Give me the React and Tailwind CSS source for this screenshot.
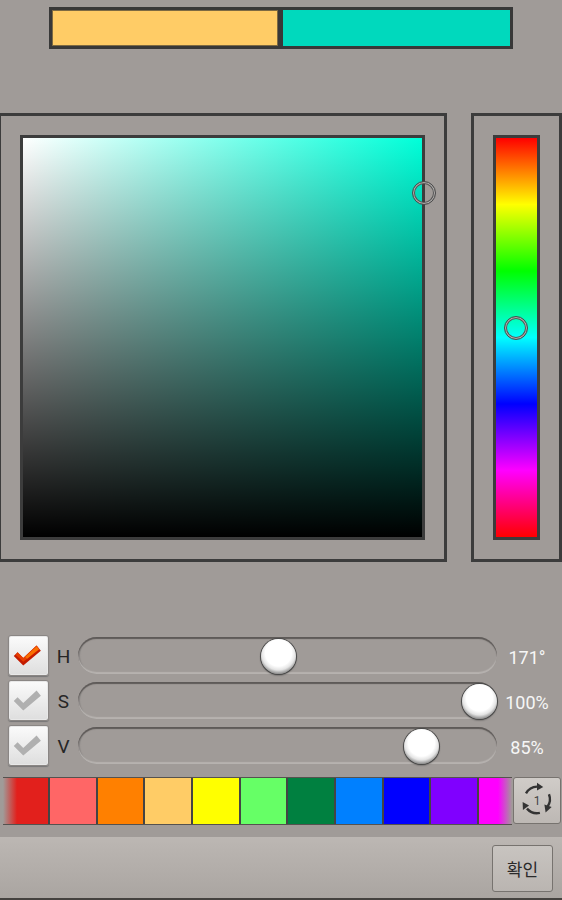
import React from "react";

const sliders = [
  { label: "H", value: "171°", on: true, knob: "left-[183px]" },
  { label: "S", value: "100%", on: false, knob: "left-[384px]" },
  { label: "V", value: "85%", on: false, knob: "left-[326px]" },
];

const palette = [
  "bg-[#e2201c]",
  "bg-[#ff6666]",
  "bg-[#ff8000]",
  "bg-[#ffcc66]",
  "bg-[#ffff00]",
  "bg-[#66ff66]",
  "bg-[#008040]",
  "bg-[#0080ff]",
  "bg-[#0000ff]",
  "bg-[#8000ff]",
  "bg-[#ff00ff]",
];

const CheckIcon = ({ on }) => (
  <svg viewBox="0 0 41 41" className="w-[39px] h-[39px]">
    {on ? (
      <>
        <polygon points="5,21 9,17 15,23 29,10 33.5,15.5 15,31" fill="#c41c00" />
        <polygon points="9,17 15,23 29,10 32,14 15,27 7,20" fill="#e63c00" />
        <polygon points="17,22 29,11 31.5,14 19,24" fill="#f97000" />
      </>
    ) : (
      <polygon points="5,21 9,17 15,23 29,10 33.5,15.5 15,31" fill="#b0b0b0" />
    )}
  </svg>
);

const RotateIcon = () => (
  <svg viewBox="0 0 48 47" className="absolute inset-0 w-full h-full">
    <g fill="none" stroke="#333" strokeWidth="2.5">
      <path d="M12.5 16 A14 14 0 0 1 24 9" />
      <path d="M36.5 17 A14 14 0 0 1 35 30" />
      <path d="M27 36.5 A14 14 0 0 1 13.5 32" />
    </g>
    <polygon points="24,5 30.5,9.5 24,13" fill="#333" />
    <polygon points="39.3,30.4 33,36 31.7,27.6" fill="#333" />
    <polygon points="15.7,28.6 9,25 9.3,33.4" fill="#333" />
  </svg>
);

const Marker = ({ className }) => (
  <div
    className={`absolute w-[24px] h-[24px] rounded-full border border-[#4a4a4a] shadow-[inset_0_0_0_1px_#b0aeac,inset_0_0_0_2px_#555] ${className}`}
  />
);

const App = () => {
  return (
    <div className="w-[562px] h-[900px] overflow-hidden flex flex-col bg-[#a09b98] font-['Roboto',sans-serif]">
      <div className="mt-[7px] ml-[49px] w-[464px] h-[42px] flex border-[3px] border-[#383838] bg-[#383838]">
        <div className="w-[226px] bg-[#ffcc66] border border-[#7d6a42]" />
        <div className="ml-[5px] flex-1 bg-[#00d9bd]" />
      </div>

      <div className="mt-[64px] -ml-[2px] flex w-[564px]">
        <div className="w-[449px] h-[449px] border-[3px] border-[#3c3c3c] p-[19px]">
          <div className="relative w-[405px] h-[405px] border-[3px] border-[#3c3c3c] bg-[linear-gradient(to_top,#000,transparent),linear-gradient(to_right,#fff,#00ffd9)]">
            <Marker className="left-[389px] top-[43px]" />
          </div>
        </div>
        <div className="ml-[24px] w-[91px] h-[449px] border-[3px] border-[#3c3c3c] p-[19px]">
          <div className="relative w-[47px] h-[405px] border-[3px] border-[#3c3c3c] bg-[linear-gradient(to_bottom,#f00,#ff0,#0f0,#0ff,#00f,#f0f,#f00)]">
            <Marker className="left-[8px] top-[178px]" />
          </div>
        </div>
      </div>

      <div className="mt-[73px] flex flex-col gap-1">
        {sliders.map((s) => (
          <div key={s.label} className="flex items-center h-[41px]">
            <div className="ml-2 w-[41px] h-[41px] rounded-[3px] border border-[#8a8684] shadow-[0_1px_1px_#777,inset_0_0_0_1px_#e8e8e8] bg-[linear-gradient(to_bottom,#fbfbfb,#dedede)]">
              <CheckIcon on={s.on} />
            </div>
            <div className="w-[29px] pt-[4px] text-center text-[19px] text-[#262626]">{s.label}</div>
            <div className="relative w-[419px] h-[37px] rounded-full shadow-[inset_0_2px_1px_#5e5a58,inset_0_-2px_1px_#b6b2af,inset_2px_0_1px_#8a8684]">
              <div
                className={`absolute top-[2px] w-[35px] h-[35px] rounded-full shadow-[0_0_0_1px_#4a4a4a,0_1px_2px_#333] bg-[radial-gradient(circle_at_50%_40%,#fff_48%,#e4e4e4_62%,#888_77%)] ${s.knob}`}
              />
            </div>
            <div className="w-[60px] pt-[3px] text-center text-[18px] text-[#f6f6f6]">{s.value}</div>
          </div>
        ))}
      </div>

      <div className="mt-[11px] flex items-stretch h-[48px]">
        <div className="relative ml-[2.5px] w-[509.5px] flex overflow-hidden border-y border-[#55524f]">
          {palette.map((c) => (
            <div key={c} className={`shrink-0 w-[47.67px] border-r-2 border-[#444] ${c}`} />
          ))}
          <div className="absolute left-0 inset-y-0 w-[14px] bg-[linear-gradient(to_right,#a09b98,transparent)]" />
          <div className="absolute right-0 inset-y-0 w-[14px] bg-[linear-gradient(to_left,#a09b98,transparent)]" />
        </div>
        <div className="relative ml-[1px] w-[48px] h-[47px] rounded-[3px] border border-[#77736f] bg-[linear-gradient(to_bottom,#d0ccc8,#bdb8b4)]">
          <RotateIcon />
          <span className="absolute inset-0 flex items-center justify-center text-[12px] text-[#444]">1</span>
        </div>
      </div>

      <div className="mt-[12px] h-[63px] flex items-start justify-end pr-[9px] pt-[8px] border-b-2 border-[#45423f] bg-[linear-gradient(to_bottom,#bcb7b3,#aaa5a1)]">
        <button className="w-[61px] h-[47px] rounded-[3px] border border-[#77736f] bg-[linear-gradient(to_bottom,#c8c4c0,#bab5b1)] text-[17px] text-[#2a2a2a] font-['Noto_Sans_CJK_KR','Noto_Sans',sans-serif]">
          확인
        </button>
      </div>
    </div>
  );
};

export default App;
